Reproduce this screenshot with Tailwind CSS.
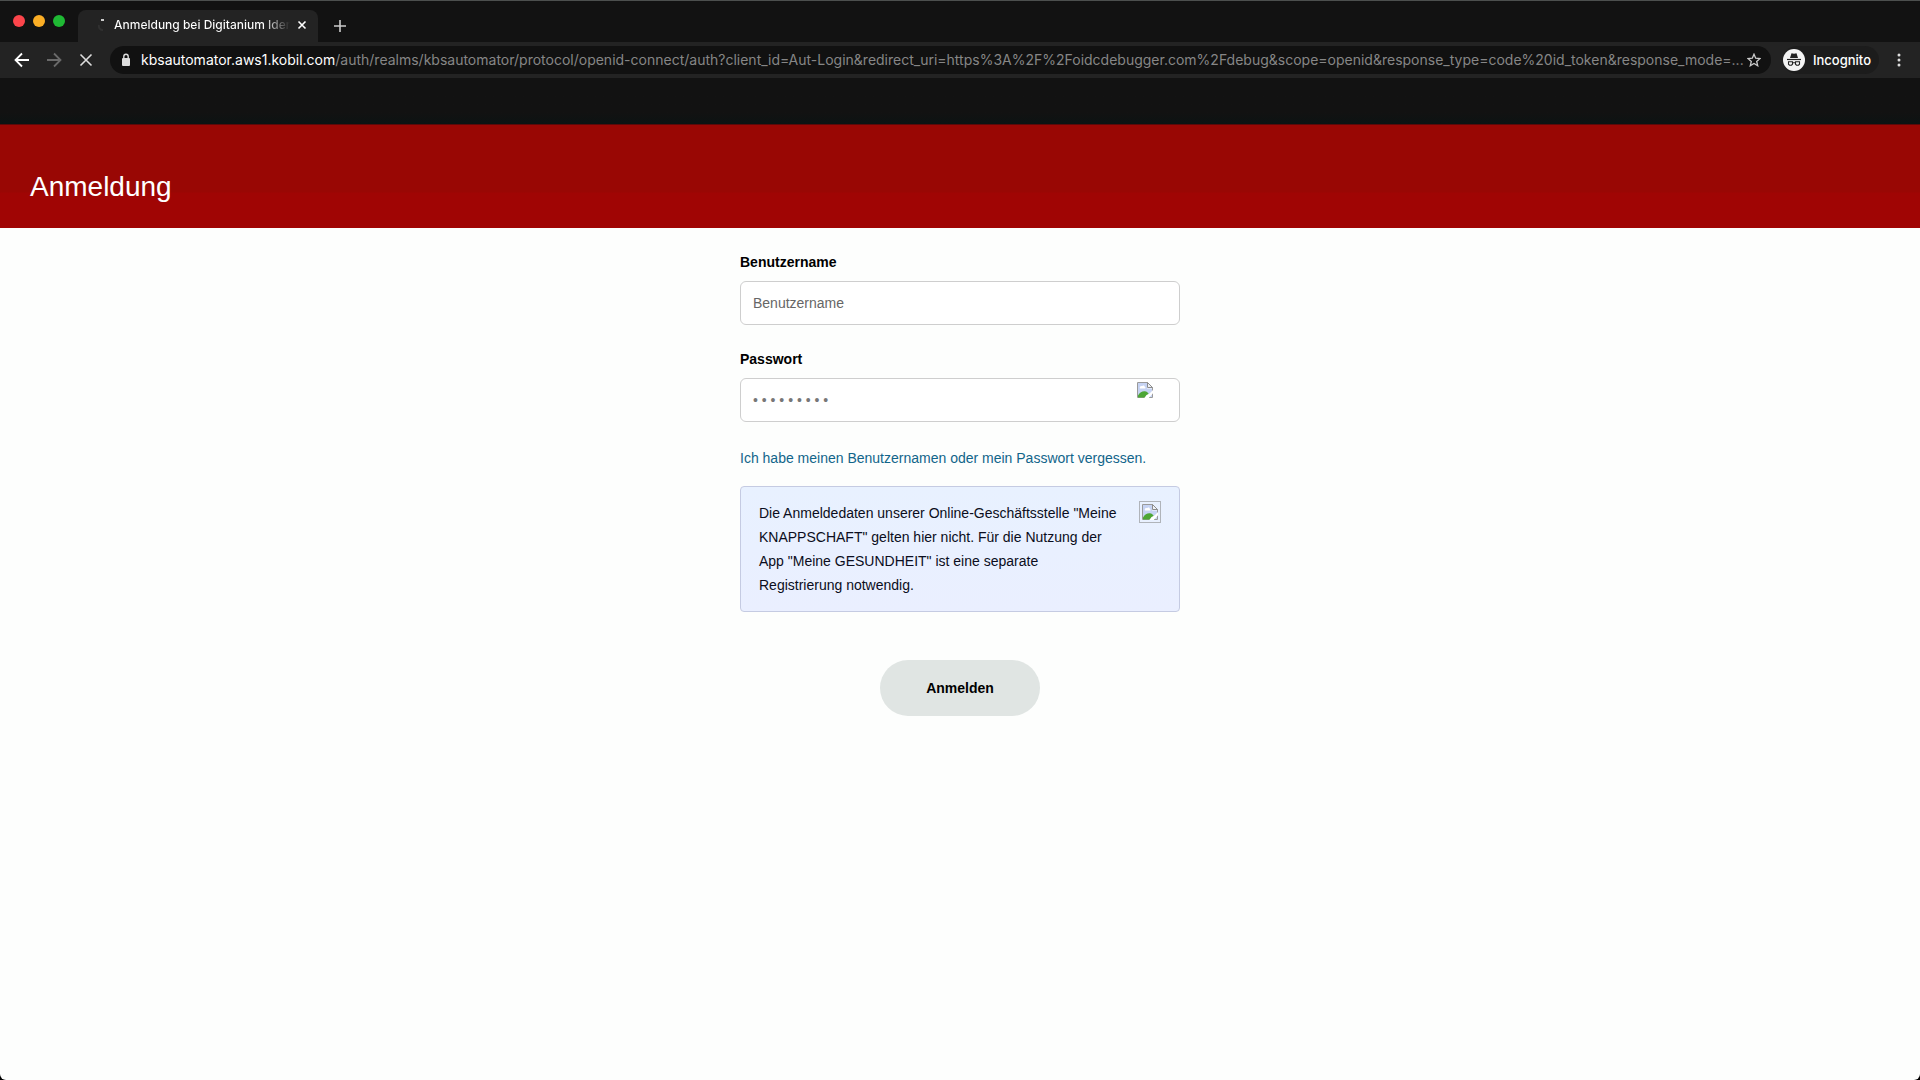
<!DOCTYPE html>
<html lang="de" class="bg-black">
<head>
<meta charset="utf-8">
<meta name="viewport" content="width=device-width, initial-scale=1">
<title>Anmeldung bei Digitanium Identity</title>
<script src="https://cdn.jsdelivr.net/npm/@tailwindcss/browser@4"></script>
</head>
<body class="flex min-h-screen flex-col rounded-b-md bg-[#fdfefd] font-['Liberation_Sans',Arial,sans-serif] text-sm text-black">
  <svg class="hidden" aria-hidden="true">
    <symbol id="broken" viewBox="0 0 16 16">
      <path d="M.5.5h10l5 5v10H.5z" fill="#fff" stroke="#9a9a9a"/>
      <path d="M1 1h9v5.500h5v8.500H1z" fill="#c6d3f3"/>
      <path d="M3 6.500c-.8-2 1-3 2-2.200 1-1.300 3-.6 2.800.8 1 .2 1 1.400.2 1.400z" fill="#fff"/>
      <path d="M1 15.500v-2c2-3.500 4.500-4.500 7-4.200 2.500.2 4 2.200 5 6.200z" fill="#4ca635"/>
      <path d="M10.500.5v5h5z" fill="#eef1f7" stroke="#8c8c8c"/>
      <path d="M7 16.500l2.500-3.500 3-1.500L16 8v3.200L11.500 16.500z" fill="#fff"/>
    </symbol>
  </svg>

  <header class="bg-[#121212] font-[Inter,sans-serif] text-white">
    <div class="flex h-[42px] items-end border-t border-[#4c4f4e]">
      <div class="flex h-full w-[78px] items-center gap-2 pb-0.5 pl-[13px]">
        <span class="size-3 rounded-full bg-[#fc454b]"></span>
        <span class="size-3 rounded-full bg-[#fbae25]"></span>
        <span class="size-3 rounded-full bg-[#1fb934]"></span>
      </div>
      <div class="flex h-8 w-60 items-center rounded-t-lg bg-[#232323] pb-0.5 pl-5">
        <svg class="h-4 w-4" viewBox="0 0 16 16" aria-hidden="true"><path d="M1 8a4 4 0 0 0 4 5" fill="none" stroke="#303030" stroke-width="2"/><rect x="3" y="2" width="3" height="2" fill="#ccc"/></svg>
        <span class="w-[176px] overflow-hidden bg-linear-to-r from-white from-85% to-transparent bg-clip-text text-xs font-medium whitespace-nowrap text-transparent">Anmeldung bei Digitanium Iden</span>
        <button class="ml-1.5 size-3" aria-label="Tab schließen"><svg viewBox="0 0 12 12" fill="none" stroke="#fff" stroke-width="1.600"><path d="M2.500 2.500l7 7M9.500 2.500l-7 7"/></svg></button>
      </div>
      <button class="mb-2.5 ml-4 size-3" aria-label="Neuer Tab"><svg viewBox="0 0 12 12" fill="none" stroke="#ccc" stroke-width="1.600"><path d="M6 0v12M0 6h12"/></svg></button>
    </div>
    <div class="flex h-9 items-center bg-[#232323] text-sm">
      <button class="ml-3.5 size-4" aria-label="Zurück"><svg viewBox="0 0 16 16" fill="none" stroke="#fff" stroke-width="1.800"><path d="M15 8H2M8 1.500L1.500 8L8 14.500"/></svg></button>
      <button class="ml-4 size-4" aria-label="Vorwärts"><svg viewBox="0 0 16 16" fill="none" stroke="#6a6a6a" stroke-width="1.800"><path d="M1 8h13M8 1.500L14.500 8L8 14.500"/></svg></button>
      <button class="ml-4 size-4" aria-label="Laden abbrechen"><svg viewBox="0 0 16 16" fill="none" stroke="#ddd" stroke-width="1.600"><path d="M2.500 2.500l11 11M13.500 2.500l-11 11"/></svg></button>
      <div class="ml-4 flex h-7 min-w-0 flex-1 items-center rounded-full bg-[#111] pr-2.5 pl-[11px]">
        <svg class="w-2.5 shrink-0" viewBox="0 0 10 14" aria-hidden="true"><rect x="1" y="5" width="8" height="8" rx="1" fill="#ddd"/><path d="M2.800 6V3.500a2.200 2.200 0 0 1 4.400 0V6" fill="none" stroke="#ddd" stroke-width="1.400"/></svg>
        <span class="ml-2.5 min-w-0 flex-1 truncate text-[#868686]"><span class="text-white">kbsautomator.aws1.kobil.com</span>/auth/realms/kbsautomator/protocol/openid-connect/auth?client_id=Aut-Login&amp;redirect_uri=https%3A%2F%2Foidcdebugger.com%2Fdebug&amp;scope=openid&amp;response_type=code%20id_token&amp;response_mode=...</span>
        <button class="size-3.5 shrink-0" aria-label="Lesezeichen"><svg viewBox="0 0 14 14" fill="none" stroke="#ccc" stroke-width="1.300"><path d="M7 1.200l1.700 4 4.300.4-3.300 2.800 1 4.300L7 10.400l-3.700 2.300 1-4.300L1 5.600l4.300-.4z"/></svg></button>
      </div>
      <button class="ml-3 flex h-7 items-center gap-2 rounded-full bg-[#1c1c1c] pr-2 text-[13px] font-medium">
        <svg class="size-[22px]" viewBox="0 0 22 22" aria-hidden="true"><circle cx="11" cy="11" r="11" fill="#f4f4f4"/><path d="M8.500 4.200l2.500.6 2.500-.6L15 9H7z" fill="#222"/><path d="M4 10.500h14" stroke="#222" stroke-width="1.200"/><path d="M5.500 12.700h4v2.500l-1 1h-2l-1-1zM12.500 12.700h4v2.500l-1 1h-2l-1-1zM9.500 13.800h3" fill="none" stroke="#222" stroke-width="1.100"/></svg>
        Incognito
      </button>
      <button class="mr-[13px] ml-3 h-4 w-4" aria-label="Menü"><svg viewBox="0 0 16 16" fill="#ddd"><circle cx="8" cy="3" r="1.500"/><circle cx="8" cy="8" r="1.500"/><circle cx="8" cy="13" r="1.500"/></svg></button>
    </div>
    <div class="h-[46px] bg-linear-to-b from-[#121212] from-75% to-[#0c1313]"></div>
  </header>

  <div class="flex h-[104px] items-center border-t border-[#5c0909] bg-linear-to-b from-[#990704] from-65% to-[#a00504] to-66% pt-5 pl-[30px]">
    <h1 class="text-[28px] leading-8 text-white">Anmeldung</h1>
  </div>

  <main class="mx-auto w-[440px] max-w-full pt-6">
    <form>
      <label for="user" class="block leading-5 font-bold">Benutzername</label>
      <input id="user" type="text" placeholder="Benutzername" class="mt-[9px] block h-11 w-full rounded-md border border-[#cecece] bg-white px-3 placeholder:text-[#666]">
      <label for="pass" class="mt-6 block leading-5 font-bold">Passwort</label>
      <div class="mt-[9px] flex h-11 rounded-md border border-[#cecece] bg-white">
        <input id="pass" type="password" placeholder="• • • • • • • • •" class="min-w-0 flex-1 bg-transparent px-3 placeholder:text-[#777]">
        <button type="button" class="mt-[3px] mr-[26px] size-4" aria-label="Passwort anzeigen"><svg class="size-4"><use href="#broken"/></svg></button>
      </div>
      <a href="#" class="mt-[26px] block leading-5 text-[#12658a]">Ich habe meinen Benutzernamen oder mein Passwort vergessen.</a>
      <div class="mt-[18px] flex items-start justify-between rounded border border-[#c5cbe2] bg-linear-to-b from-[#e8f1ff] to-[#eaefff] px-[18px] py-3.5 leading-6 text-[#0b0d20]">
        <p class="w-[362px]">Die Anmeldedaten unserer Online-Geschäftsstelle "Meine KNAPPSCHAFT" gelten hier nicht. Für die Nutzung der App "Meine GESUNDHEIT" ist eine separate Registrierung notwendig.</p>
        <svg class="size-[22px] border border-[#b0b4ba] p-0.5" aria-hidden="true"><use href="#broken"/></svg>
      </div>
      <button type="submit" class="mx-auto mt-12 block h-14 w-40 rounded-[28px] bg-[#e0e5e3] font-bold">Anmelden</button>
    </form>
  </main>
</body>
</html>
